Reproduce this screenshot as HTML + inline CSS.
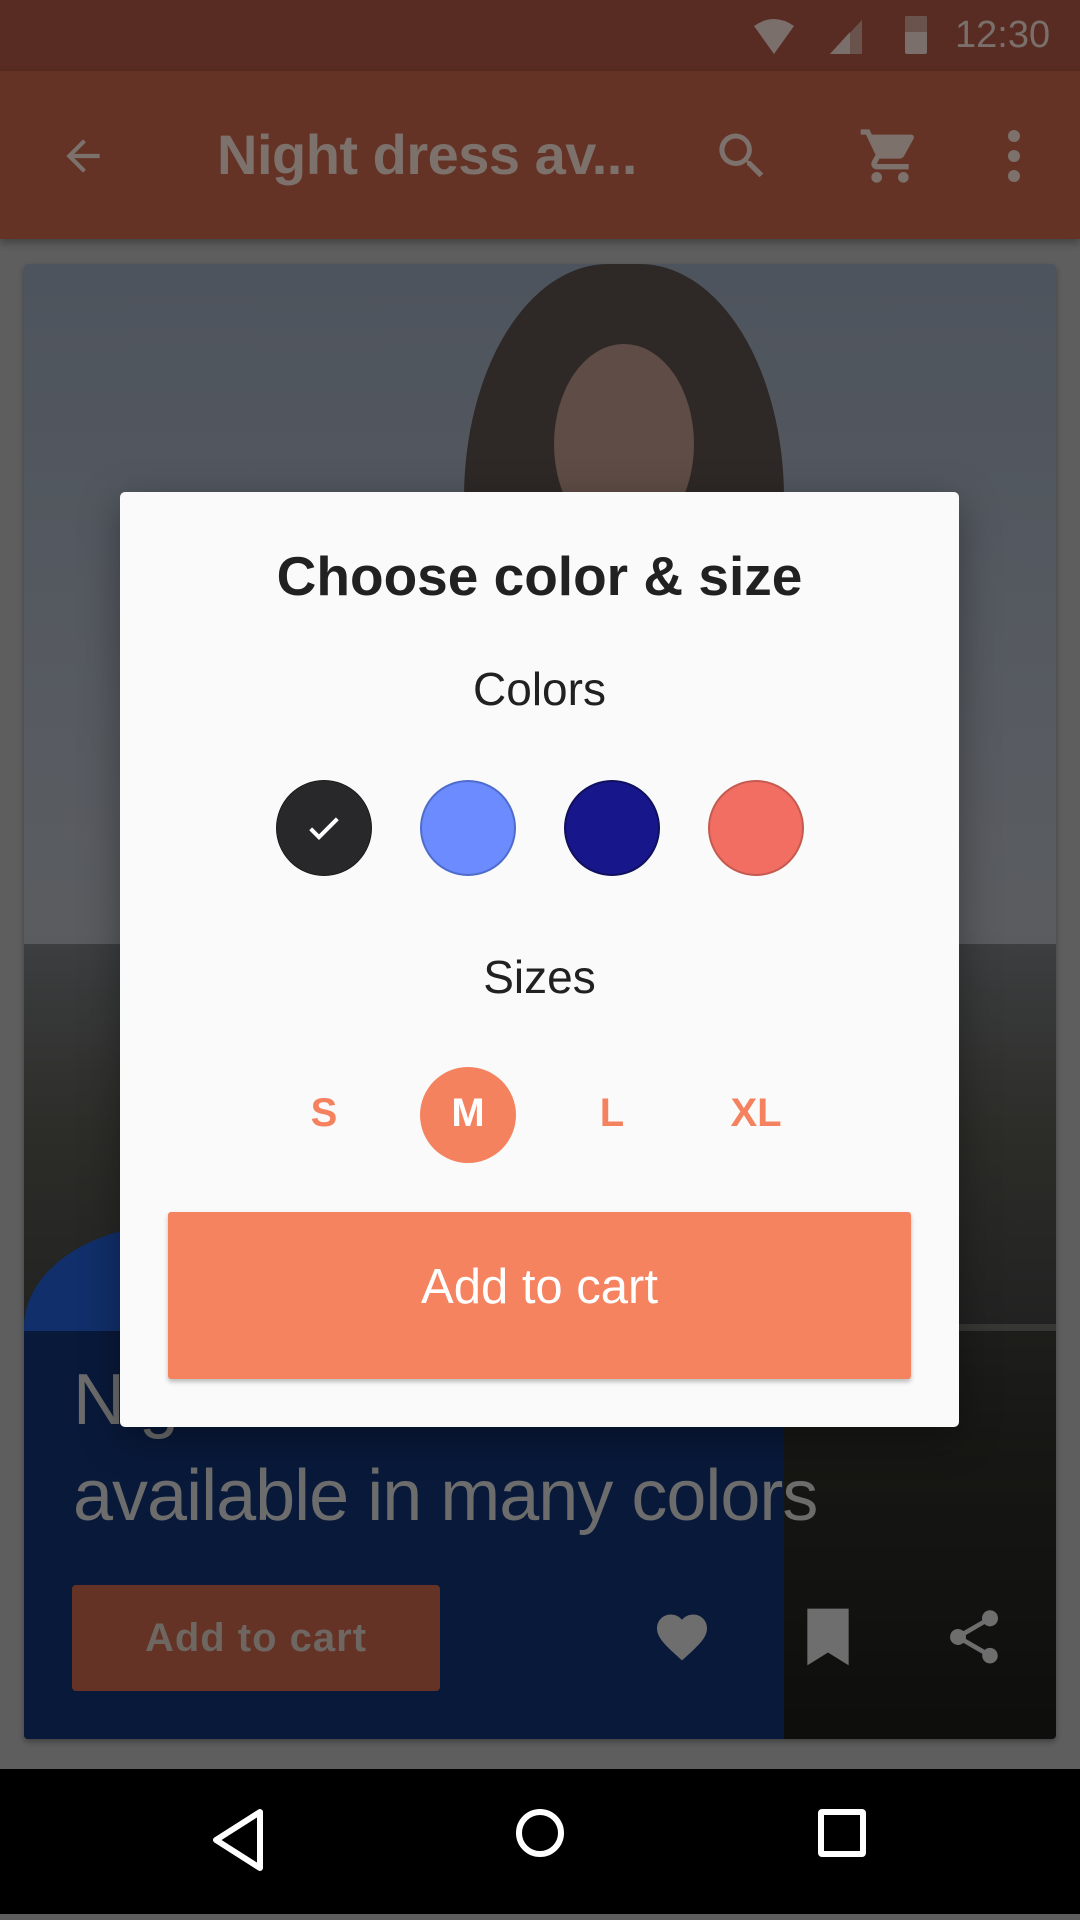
<!DOCTYPE html>
<html><head><meta charset="utf-8"><style>
*{margin:0;padding:0;box-sizing:border-box}
body{width:1080px;height:1920px;position:relative;overflow:hidden;background:#5e5e5e;font-family:"Liberation Sans",sans-serif}
.abs{position:absolute}
</style></head><body>
<!-- status bar -->
<div class="abs" style="left:0;top:0;width:1080px;height:71px;background:#582c22"></div>
<svg class="abs" style="left:752px;top:18px" width="44" height="38" viewBox="0 0 44 38"><path d="M2 8 Q22 -6 42 8 L22 36 Z" fill="#7a6f6b"/></svg>
<svg class="abs" style="left:828px;top:18px" width="36" height="38" viewBox="0 0 36 38"><path d="M34 2 L34 36 L2 36 Z" fill="#6a534d"/><path d="M22 14 L22 36 L2 36 Z" fill="#7a6f6b"/></svg>
<div class="abs" style="left:905px;top:16px;width:22px;height:38px;background:#7a6f6b;border-radius:2px"></div>
<div class="abs" style="left:905px;top:16px;width:22px;height:16px;background:#6a534d;border-radius:2px 2px 0 0"></div>
<div class="abs" style="left:955px;top:14px;font-size:38px;color:#7a6f6b">12:30</div>
<!-- toolbar -->
<div class="abs" style="left:0;top:71px;width:1080px;height:168px;background:#643326;box-shadow:0 4px 8px rgba(0,0,0,.3)"></div>
<svg class="abs" style="left:58px;top:131px" width="50" height="50" viewBox="0 0 24 24"><path d="M20 11H7.8l5.6-5.6L12 4l-8 8 8 8 1.4-1.4L7.8 13H20z" fill="#7d716c"/></svg>
<div class="abs" style="left:217px;top:122px;font-size:56px;font-weight:bold;color:#7d716c;letter-spacing:-0.5px">Night dress av...</div>
<svg class="abs" style="left:712px;top:126px" width="60" height="60" viewBox="0 0 24 24"><path d="M15.5 14h-.8l-.3-.3A6.5 6.5 0 1 0 9.5 16c1.6 0 3.1-.6 4.2-1.6l.3.3v.8l5 5 1.5-1.5zm-6 0A4.5 4.5 0 1 1 14 9.5 4.5 4.5 0 0 1 9.5 14z" fill="#7d716c"/></svg>
<svg class="abs" style="left:858px;top:124px" width="64" height="64" viewBox="0 0 24 24"><path d="M7 18a2 2 0 1 0 0 4 2 2 0 0 0 0-4zM1 2v2h2l3.6 7.6-1.4 2.4c-.1.3-.2.6-.2 1a2 2 0 0 0 2 2h12v-2H7.4a.25.25 0 0 1-.25-.25l.03-.12.9-1.63h7.45c.75 0 1.41-.41 1.750-1.03l3.58-6.49A1 1 0 0 0 20 4H5.2l-.9-2zm16 16a2 2 0 1 0 0 4 2 2 0 0 0 0-4z" fill="#7d716c"/></svg>
<svg class="abs" style="left:990px;top:126px" width="48" height="60" viewBox="0 0 10 24"><circle cx="5" cy="4" r="2.4" fill="#7d716c"/><circle cx="5" cy="12" r="2.4" fill="#7d716c"/><circle cx="5" cy="20" r="2.4" fill="#7d716c"/></svg>
<!-- card -->
<div class="abs" style="left:24px;top:264px;width:1032px;height:1475px;border-radius:4px;overflow:hidden;background:linear-gradient(#4e545d 0%,#575b61 30%,#5a5c60 45%,#4a4a4c 60%,#3a3a36 70%,#2a2a26 80%,#1a1a18 100%);box-shadow:0 3px 6px rgba(0,0,0,.3)">
  <div class="abs" style="left:440px;top:0;width:320px;height:520px;border-radius:45% 45% 20% 20%;background:#2e2926"></div>
  <div class="abs" style="left:530px;top:80px;width:140px;height:200px;border-radius:50%;background:#5f4c46"></div>
  <div class="abs" style="left:0;top:680px;width:1032px;height:380px;background:linear-gradient(#3c3e40,#2c2c28 50%,#222 100%)"></div>
  <div class="abs" style="left:0;top:960px;width:760px;height:515px;background:#112f6a;border-radius:20% 40% 0 0"></div>
  <div class="abs" style="left:0;top:1067px;width:1032px;height:408px;background:rgba(0,0,0,.45)"></div>
  <div class="abs" style="left:49px;top:1088px;font-size:72px;color:#6c6c6c;line-height:96px;letter-spacing:-1px">Night dress<br>available in many colors</div>
  <div class="abs" style="left:48px;top:1321px;width:368px;height:106px;background:#643326;border-radius:4px;font-size:40px;font-weight:bold;color:#6e6660;text-align:center;line-height:106px;letter-spacing:1px">Add to cart</div>
  <svg class="abs" style="left:628px;top:1343px" width="60" height="60" viewBox="0 0 24 24"><path d="M12 21.35l-1.45-1.32C5.4 15.36 2 12.28 2 8.5 2 5.42 4.42 3 7.5 3c1.74 0 3.41.81 4.5 2.090C13.09 3.81 14.76 3 16.5 3 19.58 3 22 5.42 22 8.5c0 3.78-3.4 6.86-8.55 11.54z" fill="#6e6e6e"/></svg>
  <svg class="abs" style="left:776px;top:1342px" width="56" height="62" viewBox="0 0 20 24"><path d="M2 1h16v22l-8-5-8 5z" fill="#6e6e6e"/></svg>
  <svg class="abs" style="left:918px;top:1341px" width="64" height="64" viewBox="0 0 24 24"><path d="M18 16.08c-.76 0-1.44.3-1.96.77L8.91 12.7c.05-.23.09-.46.09-.7s-.04-.47-.09-.7l7.05-4.11A2.99 2.99 0 0 0 21 5a3 3 0 1 0-5.91.7L8.04 9.81A2.99 2.99 0 0 0 3 12a3 3 0 0 0 5.04 2.19l7.12 4.16c-.05.21-.08.43-.08.65A2.92 2.92 0 1 0 18 16.08z" fill="#6e6e6e"/></svg>
</div>
<!-- nav bar -->
<div class="abs" style="left:0;top:1769px;width:1080px;height:145px;background:#000"></div>
<svg class="abs" style="left:210px;top:1808px" width="56" height="64" viewBox="0 0 56 64"><path d="M50 4 L50 60 L6 32 Z" fill="none" stroke="#fff" stroke-width="6" stroke-linejoin="round"/></svg>
<div class="abs" style="left:516px;top:1809px;width:48px;height:48px;border:6px solid #fff;border-radius:50%"></div>
<div class="abs" style="left:818px;top:1809px;width:48px;height:48px;border:6px solid #fff;border-radius:4px"></div>
<!-- dialog -->
<div class="abs" style="left:120px;top:492px;width:839px;height:935px;background:#fafafa;border-radius:5px;box-shadow:0 10px 40px rgba(0,0,0,.35)">
  <div class="abs" style="left:0;top:52px;width:839px;text-align:center;font-size:55px;font-weight:bold;color:#212121">Choose color &amp; size</div>
  <div class="abs" style="left:0;top:170px;width:839px;text-align:center;font-size:46px;color:#212121">Colors</div>
  <div class="abs" style="left:156px;top:288px;width:96px;height:96px;border-radius:50%;background:#28282b;border:1px solid #1a1a1a"></div>
  <svg class="abs" style="left:184px;top:316px" width="40" height="40" viewBox="0 0 24 24"><path d="M4 12.5l5 5L20 6.5" fill="none" stroke="#fff" stroke-width="2.4"/></svg>
  <div class="abs" style="left:300px;top:288px;width:96px;height:96px;border-radius:50%;background:#6b8bff;border:2px solid #4f6ccc"></div>
  <div class="abs" style="left:444px;top:288px;width:96px;height:96px;border-radius:50%;background:#17168a;border:2px solid #101060"></div>
  <div class="abs" style="left:588px;top:288px;width:96px;height:96px;border-radius:50%;background:#f26e63;border:2px solid #c55a50"></div>
  <div class="abs" style="left:0;top:458px;width:839px;text-align:center;font-size:46px;color:#212121">Sizes</div>
  <div class="abs" style="left:300px;top:575px;width:96px;height:96px;border-radius:50%;background:#f5825f"></div>
  <div class="abs" style="left:132px;top:599px;width:144px;text-align:center;font-size:40px;font-weight:bold;color:#f5825f">S</div>
  <div class="abs" style="left:276px;top:599px;width:144px;text-align:center;font-size:40px;font-weight:bold;color:#fff">M</div>
  <div class="abs" style="left:420px;top:599px;width:144px;text-align:center;font-size:40px;font-weight:bold;color:#f5825f">L</div>
  <div class="abs" style="left:564px;top:599px;width:144px;text-align:center;font-size:40px;font-weight:bold;color:#f5825f">XL</div>
  <div class="abs" style="left:48px;top:720px;width:743px;height:167px;background:#f58360;border-radius:3px;box-shadow:0 3px 5px rgba(0,0,0,.25);text-align:center;line-height:150px;font-size:49px;color:#fff">Add to cart</div>
</div>
</body></html>
